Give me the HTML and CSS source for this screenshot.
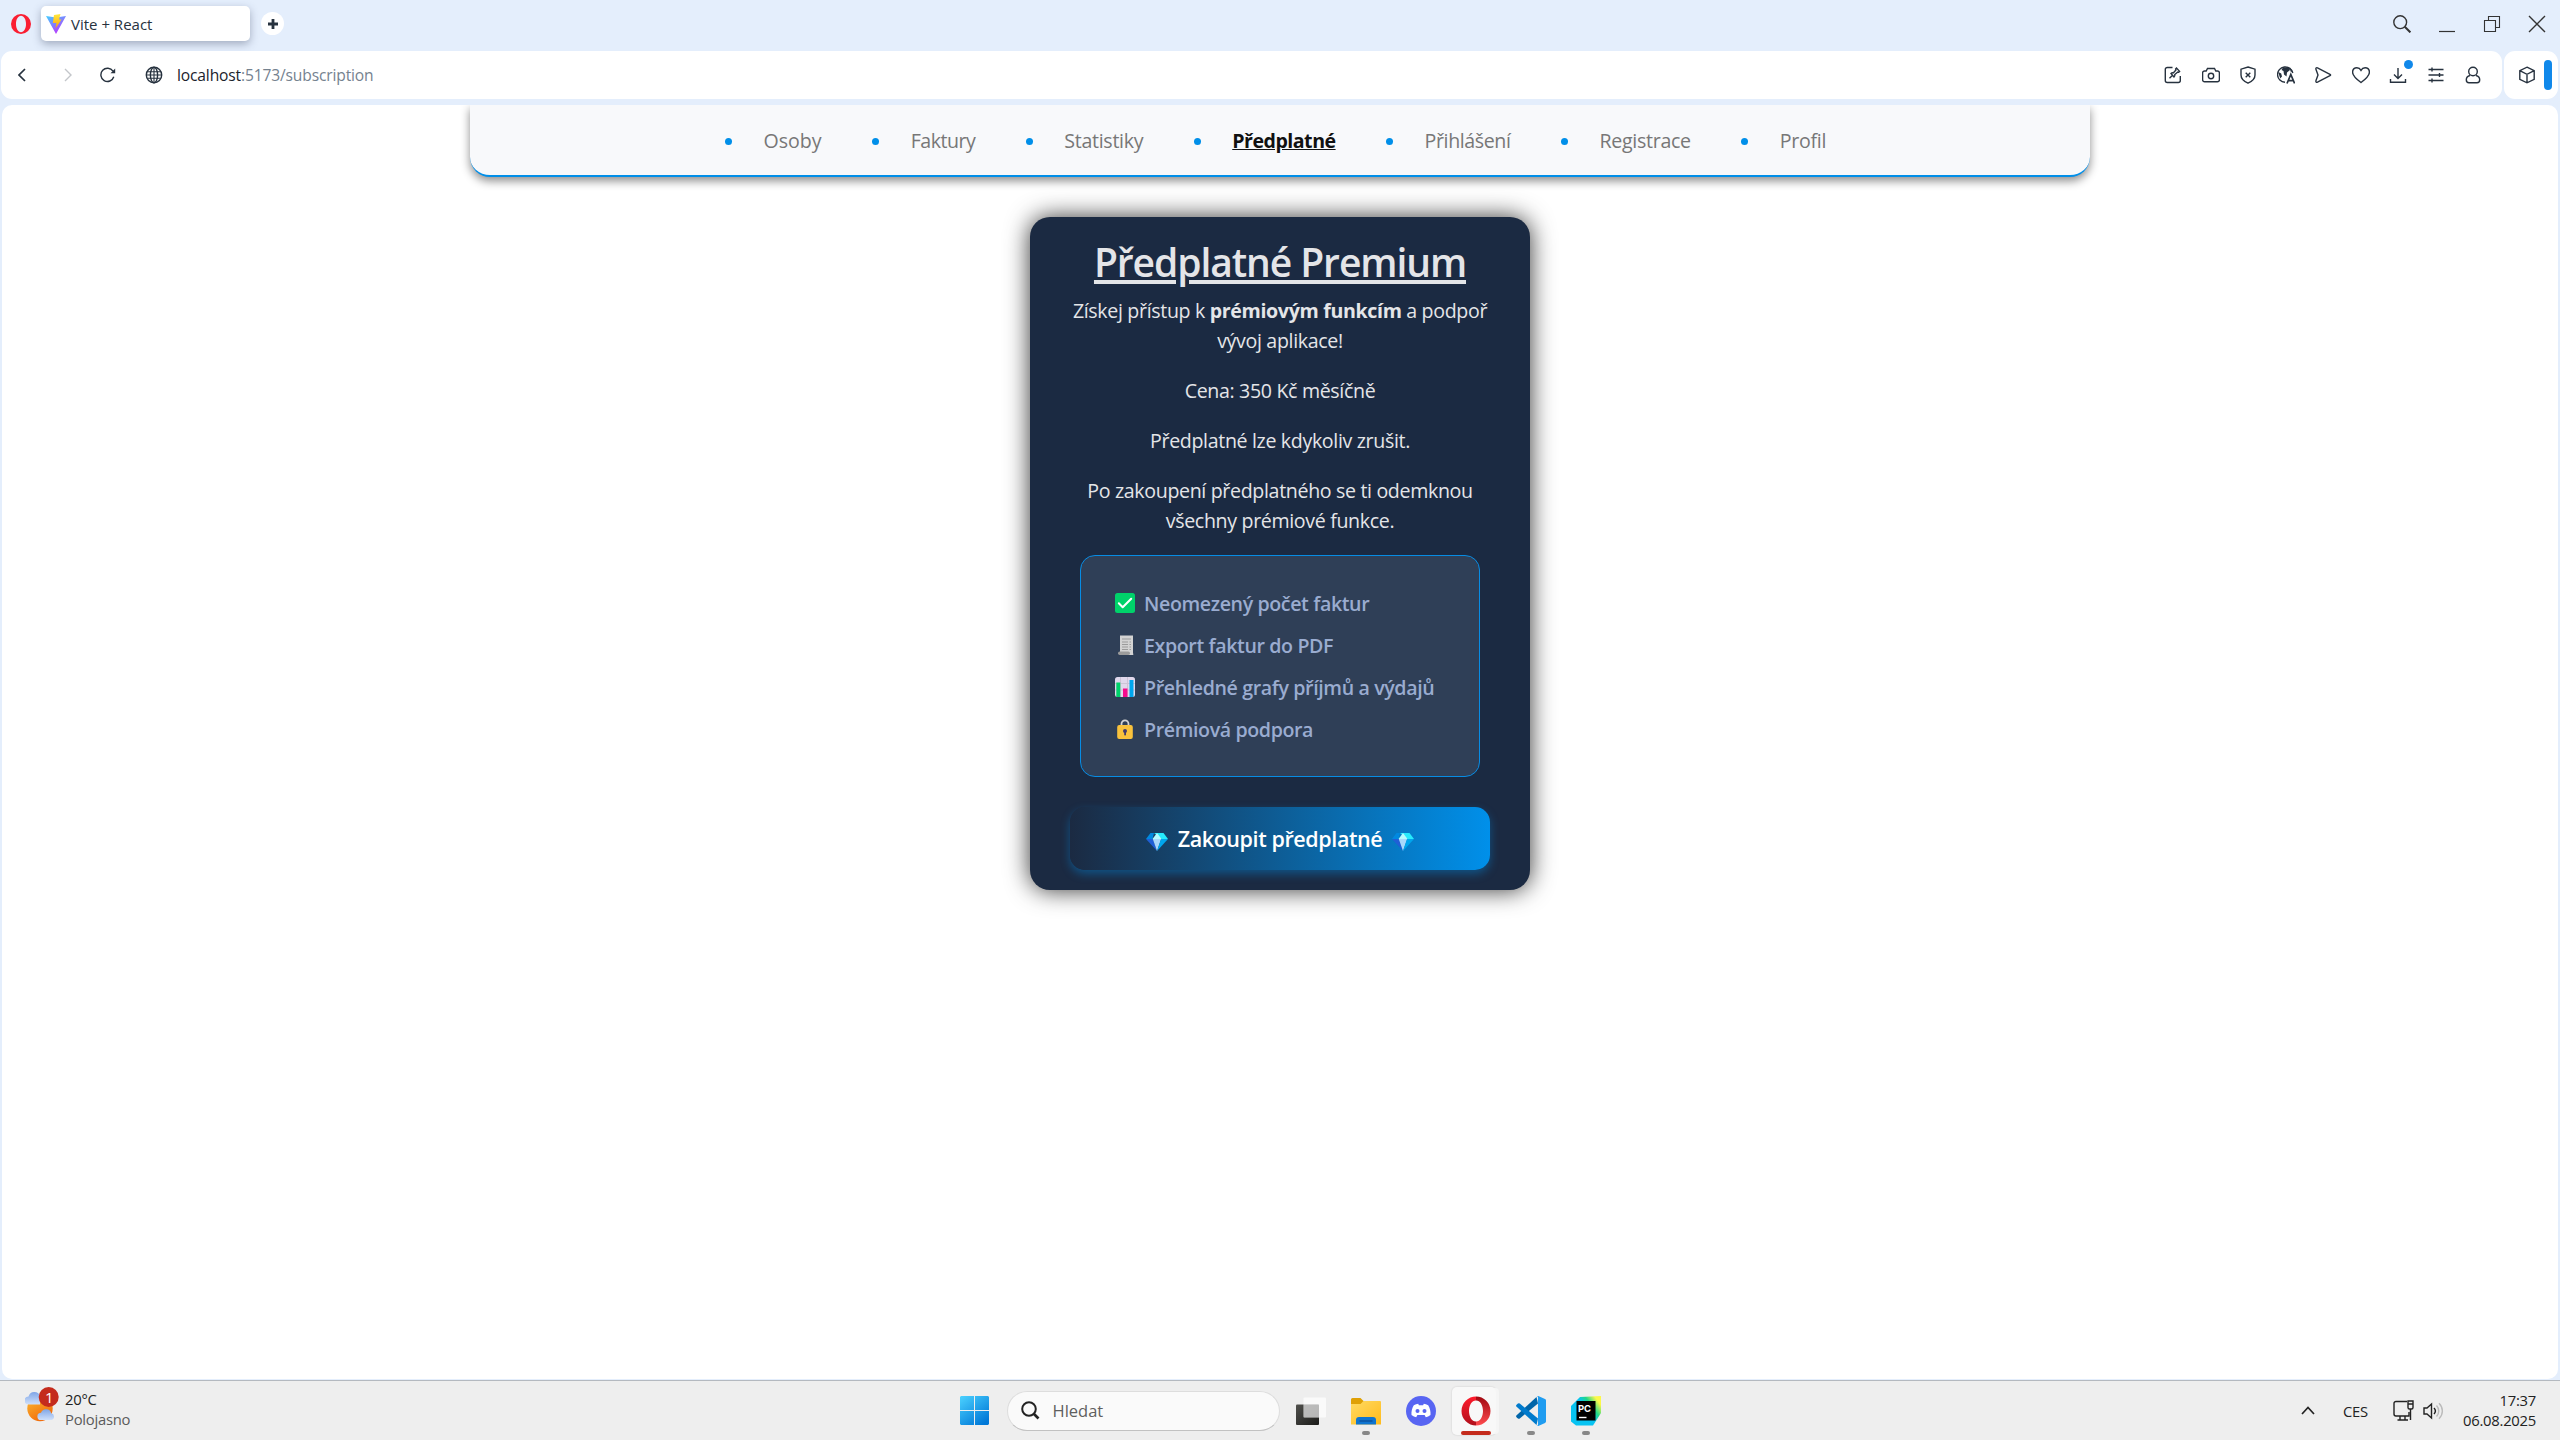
FILE: index.html
```html
<!DOCTYPE html>
<html lang="cs">
<head>
<meta charset="utf-8">
<title>Vite + React</title>
<link rel="stylesheet" href="styles.css">
</head>
<body>
<header class="tabs">
  <svg class="opera-mini" viewBox="0 0 20 20"><path fill="#fa1e32" fill-rule="evenodd" d="M10 0a10 10 0 1 0 0 20a10 10 0 0 0 0-20zM10 1.800c3 0 5 3.600 5 8.200s-2 8.200-5 8.200s-5-3.600-5-8.200s2-8.200 5-8.200z"/></svg>
  <div class="tab">
    <svg class="vite" viewBox="0 0 20 20"><defs><linearGradient id="va" x1="0" y1="0" x2=".6" y2="1"><stop offset="0" stop-color="#41d1ff"/><stop offset="1" stop-color="#bd34fe"/></linearGradient><linearGradient id="vb" x1="0" y1="0" x2="0" y2="1"><stop offset="0" stop-color="#ffea40"/><stop offset="1" stop-color="#ffa000"/></linearGradient></defs><path fill="url(#va)" d="M0 2l10 1.500L20 2 10 20z"/><path fill="url(#vb)" d="M8 1l6.500-1-1.500 5.500h2.500L9.500 14.500l1-5.500H6.800z"/></svg>
    <span class="tab-title">Vite + React</span>
  </div>
  <div class="new-tab"><svg width="10" height="10" viewBox="0 0 10 10"><path d="M5 0v10M0 5h10" stroke="#27323f" stroke-width="2.800"/></svg></div>
  <div class="window-controls">
    <span class="wc"><svg width="18" height="18" viewBox="0 0 18 18"><circle cx="7.200" cy="7.200" r="6.400"/><path d="M11.800 11.800l5.600 5.600" stroke-width="2"/></svg></span>
    <span class="wc"><svg width="18" height="18" viewBox="0 0 18 18"><path d="M1 16.500h16" stroke-width="1.200"/></svg></span>
    <span class="wc"><svg width="18" height="18" viewBox="0 0 18 18"><path d="M1.500 5.500h11v11h-11zM5.500 5V1.500h11v11H13" stroke-width="1.100"/></svg></span>
    <span class="wc"><svg width="18" height="18" viewBox="0 0 18 18"><path d="M1 1l16 16M17 1L1 17"/></svg></span>
  </div>
</header>

<div class="bars">
  <div class="address-bar">
    <svg class="back" width="8" height="14" viewBox="0 0 8 14"><path d="M7 1L1 7l6 6" stroke-width="1.700"/></svg>
    <svg class="forward" width="8" height="14" viewBox="0 0 8 14"><path d="M1 1l6 6-6 6"/></svg>
    <svg class="reload" width="16" height="16" viewBox="0 0 16 16"><path d="M13.800 9.800A6.600 6.600 0 1 1 13 4.200"/><path d="M15.200 1.500v4.700h-4.700z" fill="#27323f" stroke="none"/></svg>
    <svg class="globe" width="18" height="18" viewBox="0 0 18 18"><circle cx="9" cy="9" r="7.700"/><ellipse cx="9" cy="9" rx="3.600" ry="7.700"/><path d="M2 5.800h14M2 12.200h14M1.300 9h15.400M9 1.300v15.400" stroke-width="1.100"/></svg>
    <span class="url"><b class="host">localhost</b>:5173/subscription</span>
    <div class="tools">
      <span><svg viewBox="0 0 18 18"><path d="M8.500 1.500H3.300a2 2 0 0 0-2 2v11a2 2 0 0 0 2 2h11a2 2 0 0 0 2-2V10"/><path d="M5.500 12.300l3.300-3.300M7 7.500l3 3.400c.8-.7 1-1.500.8-2.400l3-2.500.9.300.9-.9L12.500 2l-.9 1 .3 1L9.300 6.900C8.500 6.700 7.700 6.800 7 7.500z"/></svg></span>
      <span><svg viewBox="0 0 18 18"><path d="M.6 7a2 2 0 0 1 2-2h1.600l1.300-2.500h7L13.800 5h1.600a2 2 0 0 1 2 2v6.800a2 2 0 0 1-2 2H2.600a2 2 0 0 1-2-2z"/><circle cx="9" cy="10" r="2.700"/></svg></span>
      <span><svg viewBox="0 0 18 18"><path d="M9 1l7 2.200V9c0 4-3 6.400-7 8.200C5 15.400 2 13 2 9V3.200z"/><path d="M6.700 6.700l4.600 4.600M11.300 6.700l-4.600 4.600"/></svg></span>
      <span><svg viewBox="0 0 18 18"><path d="M8 16.300A7.700 7.700 0 1 1 15.800 7"/><path d="M6 1.500l6-.5 1 3-3 2.500-.5 4L7 8.500 6.500 5 4.500 4zM1.200 6l3 1.500.8 3-1.800 2zM13 1.500l3 4.500-2.500-.5z" fill="#27323f" stroke="none"/><path d="M10 17.500L13.800 8.500l3.800 9M11.300 14.700h5" stroke-width="1.700"/></svg></span>
      <span><svg viewBox="0 0 18 18"><path d="M2 3.500c-.5-1.300.3-2.200 1.500-1.700L16 8.300c.8.400.8 1 0 1.400L3.500 16.200c-1.200.5-2-.4-1.500-1.700L4 9z"/></svg></span>
      <span><svg viewBox="0 0 18 18"><path d="M9 16.500C5 13.500.6 10 .6 6.200.6 3.500 2.500 1.700 4.900 1.700 6.700 1.700 8.200 2.800 9 4.300c.8-1.500 2.300-2.600 4.100-2.600 2.400 0 4.300 1.800 4.300 4.500 0 3.800-4.400 7.300-8.400 10.300z"/></svg></span>
      <span class="download"><svg viewBox="0 0 18 18"><path d="M9 2v10M5 8.500l4 4 4-4M1.500 13v3.200h15V13"/></svg><i class="dot"></i></span>
      <span><svg viewBox="0 0 18 18"><path d="M1.500 3.500h15M1.500 9h15M1.500 14.500h15M5 1.500v4M12.500 7v4M5 12.500v4"/></svg></span>
      <span><svg viewBox="0 0 18 18"><circle cx="9" cy="5.500" r="4.300"/><path d="M6 9.500c-2.500.6-3.700 2-3.700 4.200 0 2 1 3.100 2.700 3.100h8c1.700 0 2.700-1.100 2.700-3.100 0-2.200-1.200-3.600-3.700-4.200"/></svg></span>
    </div>
  </div>
  <div class="side-bar">
    <svg width="18" height="18" viewBox="0 0 18 18"><path d="M9 1.200l7.200 3.500v8.600L9 16.800l-7.200-3.500V4.700zM1.800 4.700L9 8.300l7.200-3.600M9 8.300v8.500"/></svg>
    <i class="grip"></i>
  </div>
</div>

<main class="page">
  <nav class="nav">
    <a class="nav-item">Osoby</a>
    <a class="nav-item">Faktury</a>
    <a class="nav-item">Statistiky</a>
    <a class="nav-item active">Předplatné</a>
    <a class="nav-item">Přihlášení</a>
    <a class="nav-item">Registrace</a>
    <a class="nav-item">Profil</a>
  </nav>

  <section class="card">
    <h1>Předplatné Premium</h1>
    <p>Získej přístup k <strong>prémiovým funkcím</strong> a podpoř<br>vývoj aplikace!</p>
    <p>Cena: 350 Kč měsíčně</p>
    <p>Předplatné lze kdykoliv zrušit.</p>
    <p>Po zakoupení předplatného se ti odemknou<br>všechny prémiové funkce.</p>
    <ul class="features">
      <li><svg viewBox="0 0 20 20"><rect width="20" height="20" rx="2.500" fill="#00d26a"/><path d="M3.800 10.300l3.900 4 8.500-8.600" fill="none" stroke="#fff" stroke-width="2" stroke-linecap="round" stroke-linejoin="round"/></svg><span>Neomezený počet faktur</span></li>
      <li><svg viewBox="0 0 20 20"><path d="M5 0l1 1 1-1 1 1 1-1 1 1 1-1 1 1 1-1 1 1 1-1 1 1 1-1 1 1v17a2 2 0 0 1-4 2H5z" fill="#d3d3d3"/><path d="M7 4h9M7 7h6M7 9.500h6M7 12h6M7 14.500h6M14.500 7H16M14.500 9.500H16M14.500 12H16M14.500 14.500H16" stroke="#9b9b9b" fill="none"/><rect x="3" y="16.500" width="12" height="3.500" rx="1.700" fill="#9b9b9b"/></svg><span>Export faktur do PDF</span></li>
      <li><svg viewBox="0 0 20 20"><rect width="20" height="20" rx="2.500" fill="#e1d8ec"/><path d="M0 6.500h20M0 13h20M5.500 0v20M12.500 0v20" stroke="#cdc4d6" fill="none"/><path fill="#00d26a" d="M1.300 5.500h4V20h-4z"/><path fill="#f70a8d" d="M8 11.500h4.500V20H8z"/><path fill="#00a6ed" d="M14.500 3h4V20h-4z"/></svg><span>Přehledné grafy příjmů a výdajů</span></li>
      <li><svg viewBox="0 0 20 20"><path d="M6.500 7.500V4.800a3.500 3.500 0 0 1 7 0V7.500" stroke="#d3d3d3" stroke-width="1.800" fill="none"/><rect x="2.200" y="6" width="15.600" height="14" rx="2" fill="#f9c23c"/><circle cx="10" cy="12" r="2" fill="#433b6b"/><rect x="9.200" y="12" width="1.800" height="4.500" rx=".8" fill="#433b6b"/></svg><span>Prémiová podpora</span></li>
    </ul>
    <button class="buy">
      <svg viewBox="0 0 22 18"><path fill="#0089e0" d="M4.500 0H8L6.500 6H0z"/><path fill="#26eafc" d="M8 0h9.500L22 6h-6.500z"/><path fill="#b5fbff" d="M11 0L6.500 6l4.500 1 4.500-1z"/><path fill="#1f5fd6" d="M0 6h7l4 12z"/><path fill="#a8d8fb" d="M6.800 6h8.400L11 18z"/><path fill="#00a6ed" d="M15 6h7L11 18z"/></svg>
      <span>Zakoupit předplatné</span>
      <svg viewBox="0 0 22 18"><path fill="#0089e0" d="M4.500 0H8L6.500 6H0z"/><path fill="#26eafc" d="M8 0h9.500L22 6h-6.500z"/><path fill="#b5fbff" d="M11 0L6.500 6l4.500 1 4.500-1z"/><path fill="#1f5fd6" d="M0 6h7l4 12z"/><path fill="#a8d8fb" d="M6.800 6h8.400L11 18z"/><path fill="#00a6ed" d="M15 6h7L11 18z"/></svg>
    </button>
  </section>
</main>

<footer class="taskbar">
  <div class="weather">
    <svg width="36" height="36" viewBox="0 0 36 36"><defs><linearGradient id="sun" x1="0" y1="0" x2=".6" y2="1"><stop offset="0" stop-color="#fdbb30"/><stop offset="1" stop-color="#f06a0c"/></linearGradient><linearGradient id="cl" x1="0" y1="0" x2="0" y2="1"><stop offset="0" stop-color="#7fa5e6"/><stop offset="1" stop-color="#cfe0fb"/></linearGradient></defs><circle cx="15" cy="21.500" r="12.700" fill="url(#sun)"/><path fill="url(#cl)" d="M3.500 17.500a4 4 0 0 1 0-8A6 6 0 0 1 15 9v8.500z"/><path fill="url(#cl)" d="M16 33a3.600 3.600 0 0 1 0-7.200 5.300 5.300 0 0 1 10.200.4A3.500 3.500 0 0 1 26.500 33z"/><circle cx="23.700" cy="10" r="10" fill="#c42b1c"/></svg>
    <b class="count">1</b>
    <div class="stack"><span>20°C</span><span class="dim">Polojasno</span></div>
  </div>
  <div class="apps">
    <span class="app"><svg width="29" height="29" viewBox="0 0 29 29"><defs><linearGradient id="win" gradientUnits="userSpaceOnUse" x1="0" y1="0" x2="22" y2="29"><stop offset="0" stop-color="#4cd2ff"/><stop offset="1" stop-color="#0078d7"/></linearGradient></defs><path fill="url(#win)" d="M1 0h13v14H0V1zM15 0h13l1 1v13H15zM0 15h14v14H1l-1-1zM15 15h14v13l-1 1H15z"/></svg></span>
    <div class="search"><svg width="19" height="19" viewBox="0 0 19 19"><circle cx="8" cy="8" r="6.800" fill="none" stroke="#222" stroke-width="2"/><path d="M12.500 12.500l5 5" stroke="#222" stroke-width="2.600"/></svg><span>Hledat</span></div>
    <span class="app"><svg width="30" height="30" viewBox="0 0 30 30"><defs><linearGradient id="tv" x1="0" y1="0" x2="1" y2="1"><stop offset="0" stop-color="#50504c"/><stop offset="1" stop-color="#1b1b19"/></linearGradient></defs><rect y="8.500" width="23" height="20.500" rx="1" fill="url(#tv)"/><rect x="7.500" y="1.500" width="22.500" height="20" rx="1" fill="#fff" fill-opacity=".72"/><path d="M7.500 8.500H23v13H7.500z" fill="#aaa" fill-opacity=".45"/></svg></span>
    <span class="app run"><svg width="30" height="30" viewBox="0 0 30 30"><defs><linearGradient id="fo" x1="0" y1="0" x2="1" y2="1"><stop offset="0" stop-color="#ffda62"/><stop offset="1" stop-color="#ffbb1c"/></linearGradient></defs><path d="M0 3.500A1.500 1.500 0 0 1 1.500 2H9.500l3 3H29v6H0z" fill="#dfa005"/><path d="M0 8h9.500l3-3H29a1 1 0 0 1 1 1v22.500H0z" fill="url(#fo)"/><path d="M5 28.500V24a3 3 0 0 1 3-3h14a3 3 0 0 1 3 3v4.500z" fill="#0f75d0"/><path d="M8.500 25h13" stroke="#0a4a94" stroke-width="1.200"/></svg></span>
    <span class="app"><svg width="30" height="30" viewBox="0 0 30 30"><circle cx="15" cy="15" r="15" fill="#5865f2"/><path fill="#fff" d="M7.800 9.200c1.600-.8 3-1.200 4.400-1.400l.7 1.400h4.200l.7-1.400c1.400.2 2.800.6 4.400 1.400 1.800 3 2.600 6.300 2.300 9.800-1.600 1.200-3.200 1.900-4.700 2.200l-1.200-2.100H11.400l-1.200 2.100c-1.500-.3-3.100-1-4.700-2.200-.3-3.500.5-6.800 2.300-9.800z"/><circle cx="11.500" cy="15" r="2" fill="#5865f2"/><circle cx="18.500" cy="15" r="2" fill="#5865f2"/></svg></span>
    <span class="app current"><svg width="30" height="30" viewBox="0 0 30 30"><defs><linearGradient id="op" x1="0" y1="0" x2="0" y2="1"><stop offset="0" stop-color="#ff1b2d"/><stop offset="1" stop-color="#b0101c"/></linearGradient><linearGradient id="oq" x1="0" y1="0" x2="0" y2="1"><stop offset="0" stop-color="#a00810"/><stop offset="1" stop-color="#ff4b4f"/></linearGradient></defs><path fill="url(#op)" d="M15 .5a14.500 14.500 0 1 0 0 29v-4c-4.200 0-7-4.700-7-10.500S10.800 4.500 15 4.500z"/><path fill="url(#oq)" d="M15 .5a14.500 14.500 0 0 1 0 29v-4c4.200 0 7-4.700 7-10.500S19.200 4.500 15 4.500z"/></svg></span>
    <span class="app run"><svg width="30" height="30" viewBox="0 0 30 30"><path d="M22 7.500L3.800 22.400a1.500 1.500 0 0 1-1.900 0L.6 21.200a1.300 1.300 0 0 1 0-1.900L20.500 1z" fill="#0065a9"/><path d="M22 22.500L3.800 7.600a1.500 1.500 0 0 0-1.900 0L.6 8.800a1.300 1.300 0 0 0 0 1.900L20.500 29z" fill="#007acc"/><path d="M22.300 0L29 3a1.800 1.800 0 0 1 1 1.700v20.600a1.800 1.800 0 0 1-1 1.700l-6.700 3a2 2 0 0 1-2-.5c.6.600 1.700.2 1.700-.7V1.200c0-.9-1.100-1.300-1.700-.7a2 2 0 0 1 2-.5z" fill="#1f9cf0"/></svg></span>
    <span class="app run"><svg width="30" height="30" viewBox="0 0 30 30"><defs><linearGradient id="py" x1="0" y1=".8" x2="1" y2=".1"><stop offset=".5" stop-color="#07c3f2"/><stop offset=".68" stop-color="#21d789"/><stop offset=".9" stop-color="#fcf84a"/></linearGradient></defs><path d="M9 1L30 0v17l-8 12.500H5L0 25.500V10z" fill="url(#py)"/><rect x="5.500" y="5" width="19" height="19.500"/><text x="7" y="15.500" font-family="Inter, sans-serif" font-size="9.500" font-weight="700" fill="#fff">PC</text><path d="M8 21.500h7.500" stroke="#fff" stroke-width="1.400"/></svg></span>
  </div>
  <div class="tray">
    <svg class="chev" width="14" height="9" viewBox="0 0 14 9"><path d="M1 8l6-6.500L13 8" fill="none" stroke="#222" stroke-width="1.700"/></svg>
    <span class="lang">CES</span>
    <svg class="net" width="21" height="21" viewBox="0 0 21 21"><path d="M14 1.500H3a2 2 0 0 0-2 2v10.500a2 2 0 0 0 2 2h13V12M4.500 20H15M7 16v4M12 16v4" fill="none" stroke="#222" stroke-width="1.400"/><path d="M15 1h5v6.500a1.500 1.500 0 0 1-1.500 1.500h-2A1.500 1.500 0 0 1 15 7.500zM15 4h5M17.500 9v11" fill="none" stroke="#222" stroke-width="1.400"/></svg>
    <svg class="vol" width="21" height="18" viewBox="0 0 21 18"><path d="M1 6h3l4.500-4v14L4 12H1z" fill="none" stroke="#222" stroke-width="1.400"/><path d="M11 6c1.700 1.800 1.700 4.200 0 6" fill="none" stroke="#222" stroke-width="1.400"/><path d="M13.500 3.500c3 3.200 3 7.800 0 11M16 1.200c4.500 4.500 4.500 11.100 0 15.600" fill="none" stroke="#bbb" stroke-width="1.400"/></svg>
    <div class="stack clock"><span>17:37</span><span>06.08.2025</span></div>
  </div>
</footer>
</body>
</html>
```
FILE: styles.css
```css
* { box-sizing: border-box; }
body {
  margin: 0;
  width: 2560px;
  height: 1440px;
  overflow: hidden;
  display: flex;
  flex-direction: column;
  background: #e4eefc;
  font-family: "Open Sans", "Noto Sans", sans-serif;
  color: #27323f;
}
svg { display: block; flex: none; }

/* tab strip */
.tabs { height: 51px; padding-left: 11px; display: flex; align-items: flex-start; }
.opera-mini { width: 20px; height: 20px; margin-top: 14px; }
.tab {
  width: 209px; height: 35px; margin: 6px 0 0 10px; padding-left: 5px;
  display: flex; align-items: center;
  background: #fff; border-radius: 5px;
  box-shadow: 0 3px 8px rgba(60, 70, 100, .4);
}
.vite { width: 20px; height: 20px; }
.tab-title { margin-left: 5px; font-size: 15px; white-space: pre; }
.new-tab {
  width: 23px; height: 23px; margin: 12px 0 0 11px; border-radius: 50%;
  background: #fff; display: flex; align-items: center; justify-content: center;
}
.window-controls { margin-left: auto; height: 48px; display: flex; padding-right: .5px; }
.wc { width: 45px; display: flex; align-items: center; justify-content: center; }
.wc svg { fill: none; stroke: #333; stroke-width: 1.4; }

/* address bar */
.bars { height: 48px; display: flex; gap: 2px; padding: 0 2px 0 1px; }
.address-bar, .side-bar { background: #fff; border-radius: 11px; display: flex; align-items: center; }
.address-bar { width: 2501px; padding-left: 17px; }
.address-bar svg, .side-bar svg { fill: none; stroke: #27323f; stroke-width: 1.4; }
.side-bar { flex: 1; padding-left: 14px; }
.grip { width: 8px; height: 30px; margin-left: 8px; border-radius: 4px; background: #1088ea; }
.address-bar .forward { margin-left: 38px; stroke: #c3c6ca; }
.reload { margin-left: 28px; }
.globe { margin-left: 29px; }
.url { margin-left: 14px; font-size: 15.6px; letter-spacing: -.15px; color: #75828f; white-space: pre; }
.host { font-weight: 400; color: #1a222c; }
.tools { margin-left: auto; margin-right: 10px; height: 48px; display: flex; }
.tools span { width: 37.5px; display: flex; align-items: center; justify-content: center; position: relative; }
.tools svg { width: 18px; height: 18px; }
.dot { position: absolute; right: 4px; top: 9px; width: 9px; height: 9px; border-radius: 50%; background: #1088ea; }

/* page */
.page {
  flex: 1; margin: 6px 2px 0; border-radius: 10px; background: #fff; overflow: hidden;
  display: flex; flex-direction: column; align-items: center;
}
.nav {
  width: 1620px; height: 72px; padding: 2px 0 0 255px;
  display: flex; align-items: center; gap: 50.5px;
  background: #f8f9fb; border-bottom: 2px solid #008fe9; border-radius: 0 0 20px 20px;
  box-shadow: 0 4px 10px rgba(0, 0, 0, .45);
}
.nav-item { display: flex; align-items: center; font-size: 19.6px; line-height: 30px; color: #777; white-space: nowrap; letter-spacing: -.3px; }
.nav-item:nth-child(1) { letter-spacing: 0; }
.nav-item:nth-child(2), .nav-item:nth-child(4) { letter-spacing: -.5px; }
.nav-item:nth-child(5) { letter-spacing: -.4px; }
.nav-item::before { content: ""; width: 7px; height: 7px; margin-right: 31.500px; border-radius: 50%; background: #008fe9; }
.nav-item.active { color: #111; font-weight: 700; text-decoration: underline; }

/* subscription card */
.card {
  width: 500px; height: 673px; margin-top: 40px; padding-top: 15px;
  display: flex; flex-direction: column; align-items: center;
  background: #1b2a42; border-radius: 20px; box-shadow: 0 0 25px rgba(0, 0, 0, .8);
  color: #e4e5e8; text-align: center; white-space: nowrap;
}
.card h1 { margin: 0 0 4px; font-size: 39px; letter-spacing: -1.08px; line-height: 60px; font-weight: 600; text-decoration: underline; text-decoration-thickness: 4px; text-underline-offset: 3px; }
.card p { margin: 0 0 20px; font-size: 19.6px; letter-spacing: -.34px; line-height: 30px; }
.card p:last-of-type { margin-bottom: 19px; }
.features {
  width: 400px; height: 222px; margin: 0 0 30px; padding: 32px 0 0 34px; list-style: none;
  display: flex; flex-direction: column; gap: 12px;
  background: #2f3f57; border: 1px solid #078ce4; border-radius: 15px;
  font-size: 19.6px; letter-spacing: -.38px; line-height: 30px; font-weight: 600; color: #9aacd0;
}
.features li { display: flex; align-items: center; gap: 9px; height: 30px; }
.features span { padding-top: 2px; }
.features svg { width: 20px; height: 20px; }
.buy {
  width: 420px; height: 63px; padding: 0; border: 0; border-radius: 15px;
  display: flex; align-items: center; justify-content: center; gap: 10px;
  background: linear-gradient(90deg, #1b2a42, #0090ea);
  box-shadow: 0 4px 10px rgba(0, 144, 234, .4);
  font: 600 21.500px "Open Sans", "Noto Sans", sans-serif; letter-spacing: -.4px; color: #fff;
}
.buy svg { width: 22px; height: 18px; margin-top: 6px; }

/* taskbar */
.taskbar {
  height: 60px; margin-top: 1px; border-top: 1px solid #b4b9c0; background: #eee;
  display: grid; grid-template-columns: 1fr 667px 1fr; color: #222; font-size: 14.8px; letter-spacing: -.25px;
}
.weather { display: flex; padding: 6px 0 0 25px; position: relative; }
.count { position: absolute; left: 45px; top: 7px; font-size: 15px; line-height: 18px; font-weight: 400; color: #fff; }
.stack { display: flex; flex-direction: column; line-height: 20px; }
.weather .stack { margin-left: 4px; padding-top: 2px; }
.dim { color: #5b5b5b; }
.apps { display: flex; align-items: center; }
.app { position: relative; width: 55px; height: 48px; display: flex; align-items: center; justify-content: center; }
.run::after, .current::after { content: ""; position: absolute; bottom: 0; left: 23.5px; width: 8px; height: 4px; border-radius: 2px; background: #888; }
.current::after { left: 12.5px; width: 30px; background: #c42b1c; }
.current svg { z-index: 1; }
.current::before { content: ""; position: absolute; left: 3.5px; top: 0; width: 44px; height: 48px; border-radius: 5px; background: #f8f8f8; box-shadow: 4px 0 0 -1px #f5f5f5, 0 0 1px 1px #e2e2e2; }
.search {
  width: 273px; height: 40px; margin: 0 3.5px 0 5px; padding-left: 13px;
  display: flex; align-items: center; gap: 13px;
  background: #fafafa; border: 1px solid #ddd; border-bottom-color: #c2c2c2; border-radius: 20px;
  font-size: 16.5px; letter-spacing: 0; color: #5f5f5f;
}
.tray { display: flex; align-items: center; justify-content: flex-end; padding-right: 24px; }
.lang { width: 25px; margin: 0 25px 0 28px; }
.vol { margin: 0 19px 0 9px; }
.clock { width: 73px; text-align: right; align-items: flex-end; padding-bottom: 2px; }
```
